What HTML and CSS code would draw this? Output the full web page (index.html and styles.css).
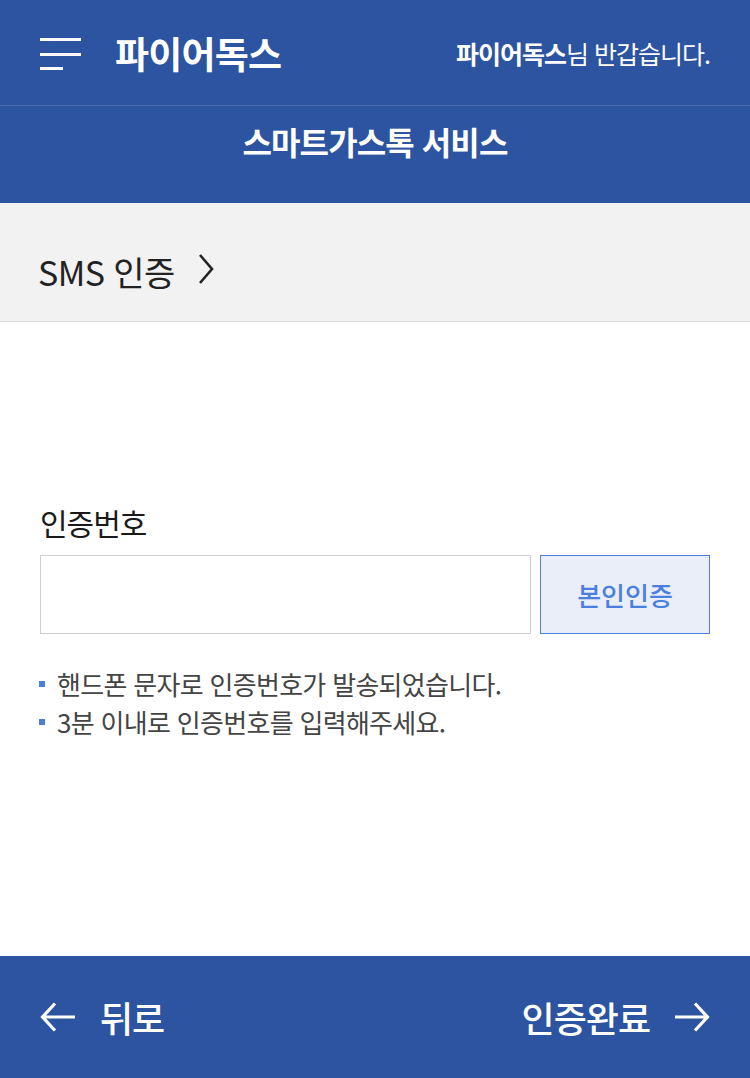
FILE: index.html
```html
<!DOCTYPE html>
<html lang="ko">
<head>
<meta charset="utf-8">
<link rel="stylesheet" href="styles.css">
</head>
<body>
<div class="page">
  <header class="header">
    <div class="topbar">
      <div class="brand">
        <svg class="menu" width="41" height="33" viewBox="0 0 41 33">
          <rect x="0" y="0" width="41" height="3" fill="#fff"/>
          <rect x="0" y="15" width="41" height="3" fill="#fff"/>
          <rect x="0" y="29" width="23" height="3" fill="#fff"/>
        </svg>
        <span class="logo">파이어독스</span>
      </div>
      <div class="greet"><b>파이어독스</b>님 반갑습니다.</div>
    </div>
    <div class="title">스마트가스톡 서비스</div>
  </header>
  <section class="crumb">
    <span>SMS 인증</span>
    <svg class="chev" width="18" height="32" viewBox="0 0 18 32">
      <polyline points="3,2 15,16 3,30" fill="none" stroke="#222" stroke-width="2.6"/>
    </svg>
  </section>
  <main class="content">
    <label class="label">인증번호</label>
    <div class="row">
      <input class="field" type="text">
      <button class="verify">본인인증</button>
    </div>
    <ul class="notes">
      <li>핸드폰 문자로 인증번호가 발송되었습니다.</li>
      <li>3분 이내로 인증번호를 입력해주세요.</li>
    </ul>
  </main>
  <footer class="footer">
    <div class="nav">
      <svg width="37" height="32" viewBox="0 0 37 32"><path d="M35 16 H3 M15 2.5 L2.5 16 L15 29.5" fill="none" stroke="#fff" stroke-width="3.2"/></svg>
      <span>뒤로</span>
    </div>
    <div class="nav">
      <span>인증완료</span>
      <svg width="37" height="32" viewBox="0 0 37 32"><path d="M2 16 H34 M22 2.5 L34.5 16 L22 29.5" fill="none" stroke="#fff" stroke-width="3.2"/></svg>
    </div>
  </footer>
</div>
</body>
</html>
```
FILE: styles.css
```css
* { box-sizing: border-box; margin: 0; padding: 0; }
html, body { width: 750px; height: 1078px; }
body {
  font-family: "Noto Sans CJK KR", "Noto Sans", sans-serif;
  background: #fff;
  color: #222;
}
.page {
  height: 1078px;
  display: flex;
  flex-direction: column;
}
.header { background: #2c54a0; color: #fff; }
.topbar {
  height: 106px;
  display: flex;
  align-items: center;
  justify-content: space-between;
  padding: 0 40px;
  border-bottom: 1px solid #4c6db0;
}
.brand { display: flex; align-items: center; gap: 34px; }
.menu { display: block; margin-top: 4px; }
.logo {
  font-size: 37px;
  font-weight: 700;
  letter-spacing: -0.8px;
}
.greet { font-size: 25px; letter-spacing: -1px; font-weight: 400; }
.greet b { font-weight: 700; }
.title {
  height: 97px;
  display: flex;
  align-items: center;
  justify-content: center;
  font-size: 32px;
  font-weight: 700;
  letter-spacing: -0.9px;
  padding-bottom: 28px;
}
.crumb {
  height: 119px;
  background: #f2f2f2;
  border-bottom: 1px solid #dcdcdc;
  display: flex;
  align-items: center;
  padding: 18px 38px 0;
  gap: 22px;
  font-size: 34px;
  letter-spacing: -0.6px;
  color: #222;
}
.chev { display: block; margin-top: -4px; }
.content {
  flex: 1;
  padding: 180px 40px 0;
}
.label {
  display: block;
  font-size: 30px;
  letter-spacing: -1px;
  color: #1a1a1a;
  line-height: 40px;
  margin-bottom: 13px;
}
.row { display: flex; gap: 9px; }
.field {
  width: 491px;
  height: 79px;
  border: 1px solid #cfcfcf;
  background: #fff;
}
.verify {
  width: 170px;
  height: 79px;
  border: 1px solid #4a80e0;
  background: #e9eef8;
  color: #4a7fe0;
  font-family: inherit;
  font-size: 26px;
  font-weight: 500;
  letter-spacing: 0;
}
.notes {
  list-style: none;
  margin-top: 31px;
  margin-left: -1px;
}
.notes li {
  display: flex;
  align-items: center;
  gap: 12px;
  font-size: 26px;
  line-height: 38px;
  letter-spacing: -0.7px;
  color: #444;
}
.notes li::before {
  content: "";
  width: 6px;
  height: 6px;
  background: #4a7fd8;
  flex: none;
}
.footer {
  height: 122px;
  background: #2c54a0;
  color: #fff;
  display: flex;
  align-items: center;
  justify-content: space-between;
  padding: 0 40px;
}
.nav {
  display: flex;
  align-items: center;
  gap: 23px;
  font-size: 36px;
  letter-spacing: -1px;
  font-weight: 500;
}
.nav svg { display: block; }
```
